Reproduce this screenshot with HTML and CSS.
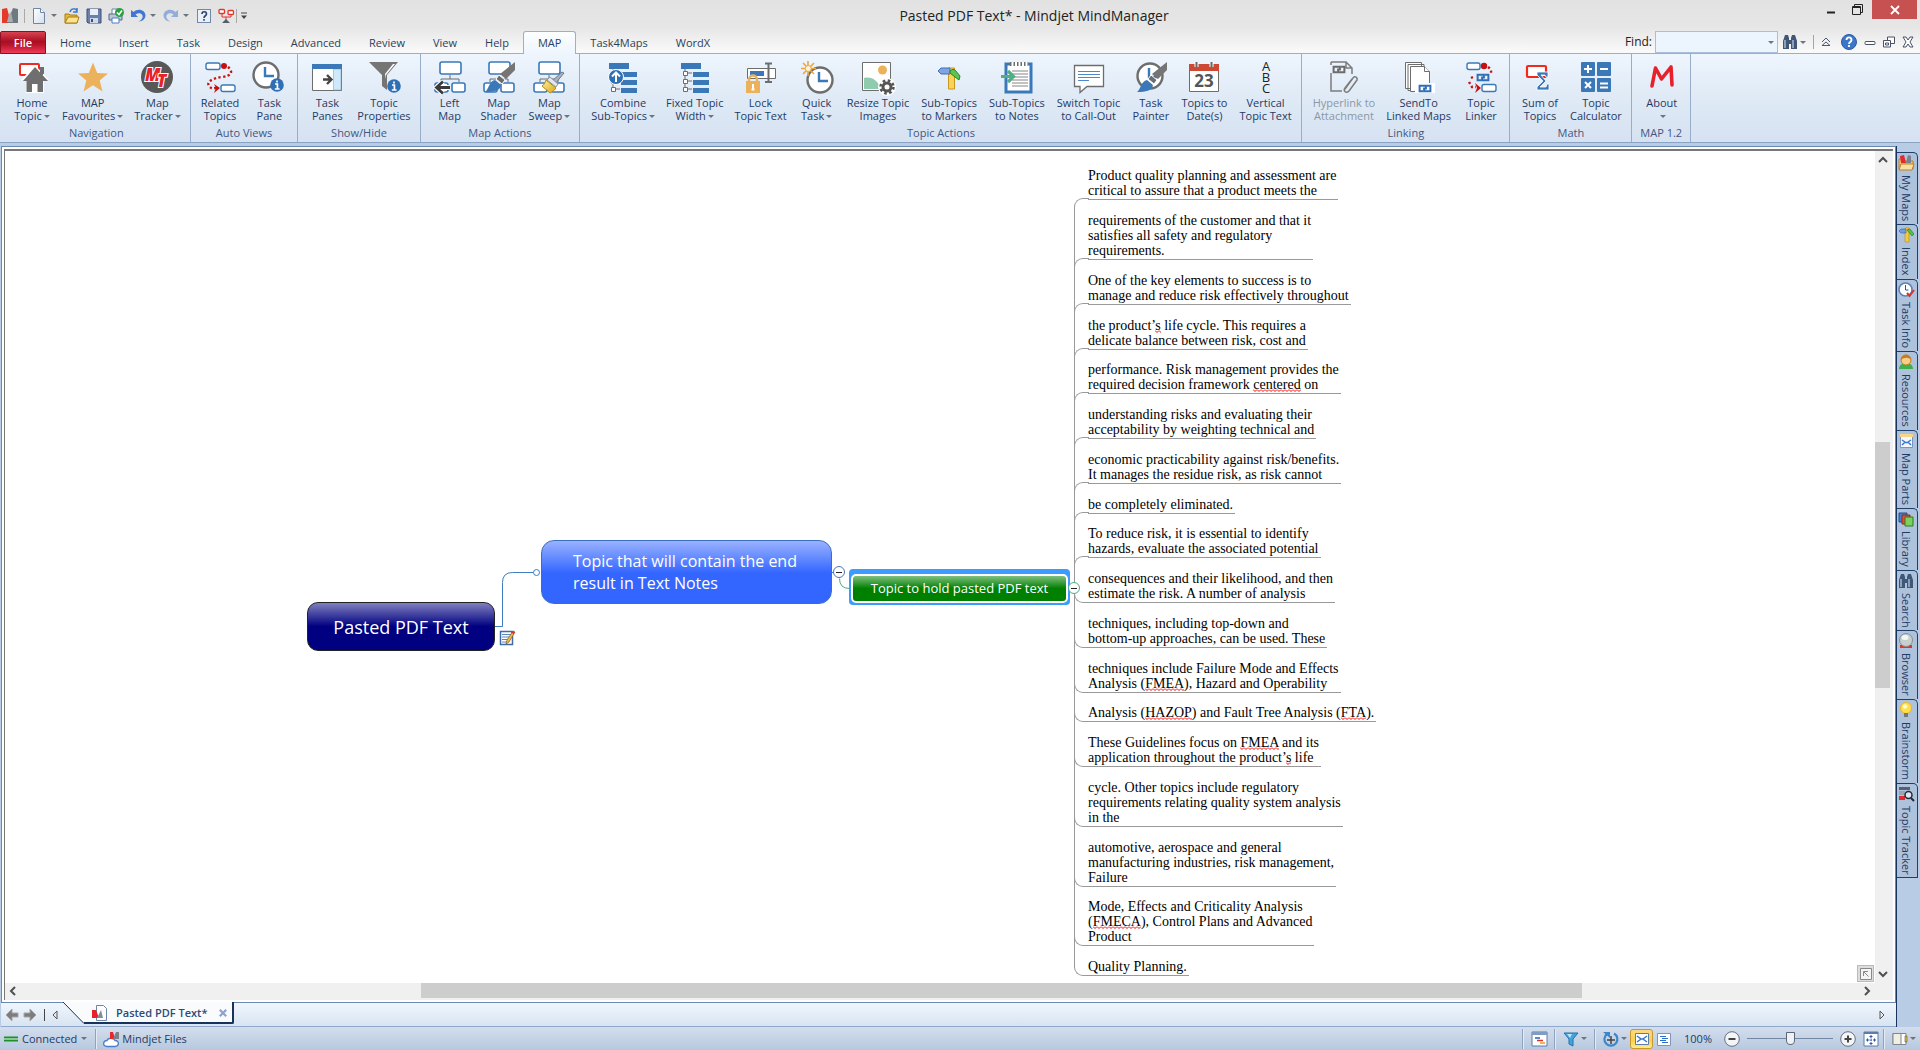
FILE: index.html
```html
<!DOCTYPE html>
<html lang="en">
<head>
<meta charset="utf-8">
<title>Pasted PDF Text* - Mindjet MindManager</title>
<link rel="stylesheet" href="styles.css">
</head>
<body>
<svg class="defs" width="0" height="0" aria-hidden="true">
  <defs>
    <linearGradient id="gold" x1="0" y1="0" x2="1" y2="1"><stop offset="0" stop-color="#fff2a0"/><stop offset="1" stop-color="#d9a514"/></linearGradient>
    <linearGradient id="page" x1="0" y1="0" x2="1" y2="1"><stop offset="0" stop-color="#fff"/><stop offset="1" stop-color="#d5dfec"/></linearGradient>
    <symbol id="mapbase" viewBox="0 0 32 32">
      <g fill="#fff" stroke="#3b78b8" stroke-width="1.6"><rect x="6" y="1" width="21" height="12" rx="2"/><rect x="1" y="22" width="13" height="9" rx="2"/><rect x="18" y="22" width="13" height="9" rx="2"/></g>
      <path d="M16 14v4M7 21v-3h18v3" fill="none" stroke="#6d6d6d"/>
    </symbol>
    <symbol id="brush" viewBox="0 0 32 32">
      <path d="M32 1v8l-9 9-6-5z" fill="#757575"/><path d="M16 14l6 5-3 4-6-5z" fill="#6d6d6d" stroke="#fff"/><path d="M12 19l6 5c-1 6-7 7-16 7 4-3 4-11 10-12z" fill="#3b78b8"/>
    </symbol>
    <symbol id="clock" viewBox="0 0 32 32">
      <circle cx="16" cy="16" r="12.5" fill="#fff" stroke="#6d6d6d" stroke-width="2.4"/><path d="M15 8v9h9" fill="none" stroke="#3b78b8" stroke-width="2.4"/>
    </symbol>
    <symbol id="info" viewBox="0 0 14 14">
      <circle cx="7" cy="7" r="6.8" fill="#2f6fb4"/><path d="M7 2.4v2.2M5 6h2.4v5M4.8 11h4.8" stroke="#fff" stroke-width="1.7" fill="none"/>
    </symbol>
    <symbol id="tree" viewBox="0 0 32 32">
      <path d="M6 7v22M6 12h7M6 20h7M6 28h7" stroke="#6d6d6d" fill="none"/>
      <g fill="#3b78b8"><path d="M2 2h20v6H2zM14 11h16v5H14zM14 19h16v5H14zM14 27h16v5H14z"/></g>
      <g fill="#fff" stroke="#6d6d6d"><path d="M4.500 10.500h4v4h-4zM4.500 18.500h4v4h-4zM4.500 26.500h4v4h-4z"/></g>
    </symbol>
    <symbol id="link" viewBox="0 0 16 10">
      <g fill="none" stroke="currentColor" stroke-width="2.2"><path d="M6 8H2V2h7v4"/><path d="M10 2h4v6H7V4"/></g>
    </symbol>
    <symbol id="binoc" viewBox="0 0 16 16">
      <path d="M3 1h3l1 3v11H1V7zM10 1h3l2 6v8H9V4zM6 6h4v4H6z" fill="#3f5878"/><path d="M3 6v8M11 6v8" stroke="#b7c6dc" stroke-width="1.3"/>
    </symbol>
    <symbol id="signpost" viewBox="0 0 16 16">
      <path d="M7 1h4v14H7z" fill="#f5c93a" stroke="#b98a16" stroke-width=".6"/><path d="M1 4l2-2h5v4H3z" fill="#6f9de0" stroke="#2f61b0" stroke-width=".6"/><path d="M9 3l3-1 4 5-2 2z" fill="#52c24a" stroke="#20791d" stroke-width=".6"/>
    </symbol>
    <symbol id="mlogo" viewBox="0 0 16 16">
      <path d="M0 1l5-1 4 15H0z" fill="#e43a2c"/><path d="M16 1l-5-1-6 15h11z" fill="#6f7a80"/><path d="M7 6l2-2 2 10H5z" fill="#a8adb0"/>
    </symbol>
  </defs>
</svg>

<header class="top">
  <div class="titlebar">
    <div class="quick">
      <svg class="i16" viewBox="0 0 16 16"><use href="#mlogo"/></svg>
      <span class="vsep"></span>
      <button aria-label="New"><svg class="i16" viewBox="0 0 16 16"><path d="M2.500 .5h7l4 4v11h-11z" fill="url(#page)" stroke="#6e85a5"/><path d="M9.500 .5v4h4" fill="#fff" stroke="#6e85a5"/></svg></button>
      <button class="drop" aria-label="New options"><i class="caret"></i></button>
      <button aria-label="Open"><svg class="i16" viewBox="0 0 16 16"><path d="M1 15V6h4l1 1h7v8z" fill="#e6b83c" stroke="#a87d17"/><path d="M1 15l3-6h11l-2 6z" fill="#fbe28d" stroke="#a87d17"/><path d="M6 4c1-4 6-4 7-1M13 0v4H9" stroke="#3b78d0" stroke-width="1.500" fill="none"/></svg></button>
      <button aria-label="Save"><svg class="i16" viewBox="0 0 16 16"><path d="M1 1h14v14H2l-1-1z" fill="#6a7faa" stroke="#3d507a"/><path d="M4 1h8v6H4z" fill="#e8eef8"/><path d="M4 10h8v5H4z" fill="#cfd8e8"/><path d="M5 11h2v3H5z" fill="#3d507a"/></svg></button>
      <button aria-label="Print"><svg class="i16" viewBox="0 0 16 16"><path d="M4 1h7v6H4z" fill="#fff" stroke="#6e85a5"/><path d="M1 6h13v6H1z" fill="#b9c6da" stroke="#556b8e"/><path d="M4 10h7v5H4z" fill="#fff" stroke="#4d7fc0"/><circle cx="11.500" cy="4.500" r="4.500" fill="#2aa043"/><path d="M9 4.500l2 2 3-4" stroke="#fff" stroke-width="1.500" fill="none"/></svg></button>
      <button aria-label="Undo"><svg class="i16" viewBox="0 0 16 16"><path d="M1 2v7h7l-2.500-2.500c4-3 8 0 7 3-.6 2-2 3-4 4 4 0 7-3 7-6 0-5-7-8-12-3.500z" fill="#3f77d3"/></svg></button>
      <button class="drop" aria-label="Undo options"><i class="caret"></i></button>
      <button class="faded" aria-label="Redo"><svg class="i16" viewBox="0 0 16 16"><path d="M15 2v7H8l2.500-2.500c-4-3-8 0-7 3 .6 2 2 3 4 4-4 0-7-3-7-6 0-5 7-8 12-3.500z" fill="#3f77d3"/></svg></button>
      <button class="drop" aria-label="Redo options"><i class="caret"></i></button>
      <button aria-label="Help topics"><svg class="i16" viewBox="0 0 16 16"><rect x="1.500" y="1.500" width="13" height="13" fill="#eaf0f8" stroke="#7288a8"/><path d="M6 6c0-3 4.500-3 4.500 0 0 2-2.500 1.500-2.500 4M8 11v1.800" fill="none" stroke="#28436d" stroke-width="1.600"/></svg></button>
      <button aria-label="Map link"><svg class="i16" viewBox="0 0 16 16"><g fill="#fff" stroke="#e0352b" stroke-width="1.300"><rect x="1" y="1.500" width="5.500" height="4" rx="1"/><rect x="10" y="2.500" width="5.500" height="4" rx="1"/></g><path d="M4 6v3h9V7M8 9v4" fill="none" stroke="#e0352b"/><path d="M4 15l4-4 4 4z" fill="#555e6b"/></svg></button>
      <span class="vsep short"></span>
      <button class="drop" aria-label="Customize toolbar"><svg width="6" height="8" viewBox="0 0 6 8"><path d="M0 1h6" stroke="#444"/><path d="M0 3.500h6l-3 3.500z" fill="#444"/></svg></button>
    </div>
    <h1 class="title">Pasted PDF Text* - Mindjet MindManager</h1>
    <div class="winbtns">
      <button aria-label="Minimize"><svg width="10" height="12" viewBox="0 0 10 12"><path d="M1 9.500h8" stroke="#222" stroke-width="2"/></svg></button>
      <button aria-label="Restore"><svg width="12" height="12" viewBox="0 0 12 12"><path d="M3.500 3V1.500h8v8H10M1.500 3.500h8v8h-8z" fill="none" stroke="#222"/><path d="M1 4.500h9" stroke="#222"/></svg></button>
      <button class="close" aria-label="Close"><svg width="10" height="10" viewBox="0 0 10 10"><path d="M1 1l8 8M9 1L1 9" stroke="#fff" stroke-width="1.800"/></svg></button>
    </div>
  </div>
  <div class="tabrow">
    <nav class="tabs">
      <button class="file">File</button>
      <button>Home</button><button>Insert</button><button>Task</button><button>Design</button><button>Advanced</button><button>Review</button><button>View</button><button>Help</button><button class="active">MAP</button><button>Task4Maps</button><button>WordX</button>
    </nav>
    <div class="find">
      <label for="find">Find:</label>
      <span class="combo"><input id="find" type="text"><i class="caret"></i></span>
      <button aria-label="Search"><svg class="i16" viewBox="0 0 16 16"><use href="#binoc"/></svg><i class="caret"></i></button>
      <span class="vsep blue"></span>
      <button class="collapse" aria-label="Collapse ribbon"><svg width="10" height="10" viewBox="0 0 10 10"><path d="M1 5l4-4 4 4M1 8.500L5 5l4 3.500z" fill="none" stroke="#4b5a70"/></svg></button>
      <button aria-label="Help"><svg class="i16" viewBox="0 0 16 16"><circle cx="8" cy="8" r="7.500" fill="#3c76c9" stroke="#2a5aa3"/><path d="M5.500 6c0-3.500 5-3.500 5 0 0 2-2.500 2-2.500 4M8 11v2" fill="none" stroke="#fff" stroke-width="1.800"/></svg></button>
      <button aria-label="Minimize map"><svg width="12" height="12" viewBox="0 0 12 12"><rect x="1" y="5.500" width="10" height="3" rx="1" fill="#fff" stroke="#4b5266"/></svg></button>
      <button aria-label="Restore map"><svg width="12" height="12" viewBox="0 0 12 12"><path d="M4.500 1h7v6.500h-7z" fill="#fff" stroke="#4b5266"/><path d="M.5 4.500h7V11h-7z" fill="#fff" stroke="#4b5266"/><path d="M2.500 7h3v2h-3z" fill="none" stroke="#4b5266"/></svg></button>
      <button aria-label="Close map"><svg width="12" height="12" viewBox="0 0 12 12"><path d="M1 1h3l2 3 2-3h3L8 6l3 5H8L6 8l-2 3H1l3-5z" fill="#fff" stroke="#4b5266"/></svg></button>
    </div>
  </div>
</header>

<section class="ribbon">
  <div class="group">
    <div class="btns">
      <button><svg class="i32" viewBox="0 0 32 32"><rect x="4" y="3" width="19" height="11" rx="1" fill="#fff" stroke="#f02a1c" stroke-width="2"/><path d="M24 6h4v7h-4z" fill="#3b78b8"/><path d="M19 4l14 15h-5v13H10V19H5z" fill="#fff"/><path d="M19 6l13 14h-5v11h-5.500v-8H16v8h-5.500V20H7z" fill="#6f6f6f"/><path d="M24 6h3v8h-3z" fill="#6f6f6f"/></svg><span>Home<br>Topic<i class="caret"></i></span></button>
      <button><svg class="i32" viewBox="0 0 32 32"><path d="M16 1.500l4.200 10.500 10.800.6-8.300 7 2.800 10.900-9.500-6.200-9.500 6.200 2.800-10.900-8.300-7 10.800-.6z" fill="#ebb25b"/></svg><span>MAP<br>Favourites<i class="caret"></i></span></button>
      <button><svg class="i32" viewBox="0 0 32 32"><circle cx="16" cy="16" r="16" fill="#585858"/><text class="mt" x="4" y="20" font-size="17">M</text><text class="mt" x="16" y="26" font-size="17">T</text></svg><span>Map<br>Tracker<i class="caret"></i></span></button>
    </div>
    <h2>Navigation</h2>
  </div>
  <div class="group">
    <div class="btns">
      <button><svg class="i32" viewBox="0 0 32 32"><g fill="#fff" stroke="#3b78b8" stroke-width="1.400"><rect x="2" y="2" width="14" height="6.500" rx="2"/><rect x="17" y="24" width="14" height="6.500" rx="2"/></g><circle cx="20" cy="5" r="3" fill="#c8100f"/><path d="M24 6c6 5 3 9-6 10S2 21 5 25s5 2 7 2" fill="none" stroke="#c8100f" stroke-width="2.400" stroke-dasharray="2.200 2.400"/><path d="M10 23l6 4-6 5 2-5z" fill="#c8100f"/></svg><span>Related<br>Topics</span></button>
      <button><svg class="i32" viewBox="0 0 32 32"><use href="#clock" x="-3" y="-2" width="32" height="32"/><use href="#info" x="17" y="17" width="14" height="14"/></svg><span>Task<br>Pane</span></button>
    </div>
    <h2>Auto Views</h2>
  </div>
  <div class="group">
    <div class="btns">
      <button><svg class="i32" viewBox="0 0 32 32"><path d="M1.500 4v25.500h29V4" fill="#fff" stroke="#6d6d6d"/><path d="M22.500 8H30v21h-7.500z" fill="#cdeafc" stroke="#8fa8c0" stroke-width=".6"/><path d="M1 3h30v5H1z" fill="#3b78b8"/><path d="M12 18.500h8M16 14l4.500 4.500L16 23" fill="none" stroke="#444" stroke-width="2.400"/></svg><span>Task<br>Panes</span></button>
      <button><svg class="i32" viewBox="0 0 32 32"><path d="M1 1h29L19 14v15l-5-4V14z" fill="#757575"/><path d="M25 3h2l-9 11v4l-1-5z" fill="#fff"/><use href="#info" x="19" y="18" width="14" height="14"/></svg><span>Topic<br>Properties</span></button>
    </div>
    <h2>Show/Hide</h2>
  </div>
  <div class="group">
    <div class="btns">
      <button><svg class="i32" viewBox="0 0 32 32"><use href="#mapbase"/><path d="M15 26.500H3M9 20.500l-6.500 6 6.500 6" fill="none" stroke="#fff" stroke-width="5"/><path d="M16 26.500H3M9 20.500l-6.500 6 6.500 6" fill="none" stroke="#3a3a3a" stroke-width="2.800"/></svg><span>Left<br>Map</span></button>
      <button><svg class="i32" viewBox="0 0 32 32"><use href="#mapbase"/><use href="#brush"/></svg><span>Map<br>Shader</span></button>
      <button><svg class="i32" viewBox="0 0 32 32"><use href="#mapbase"/><path d="M31 12l-9 11-3-3 10-9z" fill="#a8b2bf" stroke="#707a88"/><path d="M17 16l8 7-2 3-9-7z" fill="#e4e8ee" stroke="#8a93a0"/><path d="M13 19l10 8c-2 3-4 4-6 5l-8-7c2-1 3-3 4-6z" fill="url(#gold)" stroke="#b98a16"/></svg><span>Map<br>Sweep<i class="caret"></i></span></button>
    </div>
    <h2>Map Actions</h2>
  </div>
  <div class="group large">
    <div class="btns">
      <button><svg class="i32" viewBox="0 0 32 32"><use href="#tree"/><circle cx="9" cy="16" r="7.500" fill="#2f6fb4" stroke="#fff"/><path d="M9 21v-9M5 15.500l4-4 4 4" fill="none" stroke="#fff" stroke-width="2"/></svg><span>Combine<br>Sub-Topics<i class="caret"></i></span></button>
      <button><svg class="i32" viewBox="0 0 32 32"><use href="#tree"/></svg><span>Fixed Topic<br>Width<i class="caret"></i></span></button>
      <button><svg class="i32" viewBox="0 0 32 32"><path d="M2.500 7.500h28v10h-28z" fill="#fff" stroke="#6d6d6d"/><path d="M5 10h14v5H5z" fill="#3b78b8"/><path d="M20 2.500h7M23.500 3v18M20 21h7" fill="none" stroke="#6d6d6d" stroke-width="2"/><path d="M4 21v-2c0-6 8-6 8 0v2" fill="none" stroke="#ebb25b" stroke-width="2.500"/><path d="M1 20h14v12H1z" fill="#ebb25b"/><path d="M8 23v5M6.500 28.500h3" stroke="#fff" stroke-width="2"/></svg><span>Lock<br>Topic Text</span></button>
      <button><svg class="i32" viewBox="0 0 32 32"><use href="#clock" x="3" y="3" width="32" height="32"/><g stroke="#eda63c" stroke-width="1.600"><path d="M7 0v15M0 7.500h15M2 2l11 11M13 2L2 13"/></g><circle cx="7.200" cy="7.500" r="3" fill="#fff3d6" stroke="#eda63c"/></svg><span>Quick<br>Task<i class="caret"></i></span></button>
      <button><svg class="i32" viewBox="0 0 32 32"><path d="M.5 1.500h28v28H.5z" fill="#fff" stroke="#6d6d6d"/><circle cx="20.500" cy="9" r="4.500" fill="#ebb25b"/><path d="M2 17c8-2 14 3 17 11H2z" fill="#8fcbae"/><circle cx="25" cy="26" r="6" fill="none" stroke="#fff" stroke-width="6"/><circle cx="25" cy="26" r="6.500" fill="none" stroke="#555" stroke-width="2.500" stroke-dasharray="2.600 2.500"/><circle cx="25" cy="26" r="4" fill="#fff" stroke="#555" stroke-width="3"/></svg><span>Resize Topic<br>Images</span></button>
      <button><svg class="i32" viewBox="0 0 32 32"><path d="M15.500 7h6v21h-6z" fill="#f7d35a" stroke="#c9971b"/><path d="M5 10l3-3h9v6H8z" fill="#7ea4e2" stroke="#426fb8"/><path d="M17 10c2-2 4-2 5-1l5 6-1 4-4-3-5-4z" fill="#5cc552" stroke="#2a8327"/></svg><span>Sub-Topics<br>to Markers</span></button>
      <button><svg class="i32" viewBox="0 0 32 32"><path d="M5 3h25v28H5z" fill="#fff" stroke="#3b78b8" stroke-width="3"/><path d="M9 1h18v5H9z" fill="#fff"/><path d="M9 3h18" stroke="#6d6d6d" stroke-width="4" stroke-dasharray="1.500 2"/><path d="M11 10h16M11 13h16M11 16h16M11 19h16M11 22h16M11 25h16" stroke="#858585"/><path d="M0 15.500h10M7 10l5.500 5.500L7 21" fill="none" stroke="#4caf86" stroke-width="3.200"/></svg><span>Sub-Topics<br>to Notes</span></button>
      <button><svg class="i32" viewBox="0 0 32 32"><path d="M1.500 4.500h29v21H14l-7 6v-6H1.500z" fill="#fff" stroke="#6d6d6d" stroke-width="1.300"/><path d="M5 10.500h22M5 13.500h22M5 16.500h22M5 19.500h11" stroke="#4d88c8"/></svg><span>Switch Topic<br>to Call-Out</span></button>
      <button><svg class="i32" viewBox="0 0 32 32"><use href="#clock" x="-1" y="-1" width="32" height="32"/><use href="#brush"/></svg><span>Task<br>Painter</span></button>
      <button><svg class="i32" viewBox="0 0 32 32"><path d="M1.500 4.500h29v26h-29z" fill="#fff" stroke="#6d6d6d"/><path d="M1 3h30v7H1z" fill="#cc4a33"/><path d="M8.500 1v5M23.500 1v5" stroke="#fff" stroke-width="4"/><path d="M8.500 1v5M23.500 1v5" stroke="#666" stroke-width="2"/><text class="day" x="16" y="26" text-anchor="middle">23</text></svg><span>Topics to<br>Date(s)</span></button>
      <button><svg class="i32" viewBox="0 0 32 32"><g class="abc" text-anchor="middle"><text x="16" y="10">A</text><text x="16" y="21">B</text><text x="16" y="32">C</text></g></svg><span>Vertical<br>Topic Text</span></button>
    </div>
    <h2>Topic Actions</h2>
  </div>
  <div class="group">
    <div class="btns">
      <button disabled><svg class="i32" viewBox="0 0 32 32"><path d="M3 1h15l6 6v6M18 1v6h6M3 12v18h11M3 1v3" fill="none" stroke="#7c7c7c" stroke-width="1.500"/><use href="#link" x="1" y="4" width="20" height="9" color="#6b6b6b"/><path d="M17 28l8-11c2-3 5 0 4 2l-8 11c-3 3-6 0-4-3l7-9" fill="none" stroke="#7c7c7c" stroke-width="1.500"/></svg><span>Hyperlink to<br>Attachment</span></button>
      <button><svg class="i32" viewBox="0 0 32 32"><g fill="#fff" stroke="#6d6d6d"><path d="M2.500 1.500h16v26h-16zM5 3.500h16v26H5z"/><path d="M7.500 5.500h14l5 5v20h-19z"/><path d="M21.500 5.500v5h5"/></g><path d="M12 22h20v10H12z" fill="#fff"/><use href="#link" x="13" y="23" width="18" height="9" color="#2f6fb4"/></svg><span>SendTo<br>Linked Maps</span></button>
      <button><svg class="i32" viewBox="0 0 32 32"><g fill="#fff" stroke="#3b78b8" stroke-width="1.400"><rect x="2" y="2" width="13" height="6.500" rx="2"/><rect x="17" y="23.500" width="14" height="7" rx="2"/></g><circle cx="19" cy="5" r="3.200" fill="#c8100f"/><path d="M23 6c4 3 3 5 3 7M6 17l4-2M4 21l3 5h4" fill="none" stroke="#c8100f" stroke-width="2.400" stroke-dasharray="2.200 2.400"/><path d="M10 22l6 5-6 5 2-5z" fill="#c8100f"/><use href="#link" x="8" y="12" width="20" height="9" color="#2f6fb4"/></svg><span>Topic<br>Linker</span></button>
    </div>
    <h2>Linking</h2>
  </div>
  <div class="group">
    <div class="btns">
      <button><svg class="i32" viewBox="0 0 32 32"><rect x="3" y="5" width="19" height="11" rx="1" fill="#fff" stroke="#f02a1c" stroke-width="2.200"/><path d="M13 11h11v5h-2l-1-2h-4l5 6-6 6h6l1-3h2v6H13v-3l6-6-6-6z" fill="#3b78b8" stroke="#fff" stroke-width=".8"/></svg><span>Sum of<br>Topics</span></button>
      <button><svg class="i32" viewBox="0 0 32 32"><g fill="#3b78b8"><rect x="1" y="1" width="14" height="14" rx="1"/><rect x="17" y="1" width="14" height="14" rx="1"/><rect x="1" y="17" width="14" height="14" rx="1"/><rect x="17" y="17" width="14" height="14" rx="1"/></g><path d="M8 4v8M4 8h8M20 8h8M5 21l6 6M11 21l-6 6M20 22.500h8M20 26.500h8" stroke="#fff" stroke-width="2"/></svg><span>Topic<br>Calculator</span></button>
    </div>
    <h2>Math</h2>
  </div>
  <div class="group">
    <div class="btns">
      <button><svg class="i32" viewBox="0 0 32 32"><path d="M6 25L9.500 7l6 11L25 6l1 18" fill="none" stroke="#e8202a" stroke-width="3.600" stroke-linecap="round" stroke-linejoin="round"/></svg><span>About<br><i class="caret"></i></span></button>
    </div>
    <h2>MAP 1.2</h2>
  </div>
</section>

<main class="work">
  <div class="docs">
    <div class="frame">
      <div class="pane">
        <div class="canvas">
          <svg class="wires" width="1080" height="520" aria-hidden="true">
            <g fill="none" stroke="#3d7dc0"><path d="M490 475.500h7.500v-44q0-10 10-10h21M827 421.500h2"/><circle cx="531.500" cy="421.500" r="3" fill="#fff"/></g>
            <path d="M834.500 427.500q0 10 10 10" fill="none" stroke="#4dae78"/>
          </svg>
          <div class="node central">Pasted PDF Text</div>
          <svg class="noteicon" width="16" height="16" viewBox="0 0 16 16"><path d="M1.500 1.500h12v13h-12z" fill="#fff" stroke="#3f6ca8" stroke-width="1.500"/><path d="M3 4.500h9M3 7h8M3 9.500h6M3 12h5" stroke="#5d86bd"/><path d="M14 1l2 1-6 10-3 2 1-4z" fill="#f2b84b" stroke="#8a5a16" stroke-width=".7"/><path d="M13 1l3 1-1 2-3-1z" fill="#d4362c"/></svg>
          <div class="node main-topic">Topic that will contain the end<br>result in Text Notes</div>
          <button class="fold one" aria-label="Collapse"></button>
          <div class="node selected"><span>Topic to hold pasted PDF text</span></div>
          <ul class="topics">
            <li class="up">Product quality planning and assessment are<br>critical to assure that a product meets the</li>
            <li class="up">requirements of the customer and that it<br>satisfies all safety and regulatory<br>requirements.</li>
            <li class="up">One of the key elements to success is to<br>manage and reduce risk effectively throughout</li>
            <li class="up">the product’<u>s</u> life cycle. This requires a<br>delicate balance between risk, cost and</li>
            <li class="up">performance. Risk management provides the<br>required decision framework <u>centered</u> on</li>
            <li class="up">understanding risks and evaluating their<br>acceptability by weighting technical and</li>
            <li class="up">economic practicability against risk/benefits.<br>It manages the residue risk, as risk cannot</li>
            <li class="up">be completely eliminated.</li>
            <li class="up">To reduce risk, it is essential to identify<br>hazards, evaluate the associated potential</li>
            <li>consequences and their likelihood, and then<br>estimate the risk. A number of analysis</li>
            <li>techniques, including top-down and<br>bottom-up approaches, can be used. These</li>
            <li>techniques include Failure Mode and Effects<br>Analysis (<u>FMEA</u>), Hazard and Operability</li>
            <li>Analysis (<u>HAZOP</u>) and Fault Tree Analysis (<u>FTA</u>).</li>
            <li>These Guidelines focus on <u>FMEA</u> and its<br>application throughout the product’<u>s</u> life</li>
            <li>cycle. Other topics include regulatory<br>requirements relating quality system analysis<br>in the</li>
            <li>automotive, aerospace and general<br>manufacturing industries, risk management,<br>Failure</li>
            <li>Mode, Effects and Criticality Analysis<br>(<u>FMECA</u>), Control Plans and Advanced<br>Product</li>
            <li>Quality Planning.</li>
          </ul>
          <button class="fold two" aria-label="Collapse"></button>
          <button class="corner" aria-label="Show overview"><svg width="12" height="12" viewBox="0 0 12 12"><path d="M.5.5h11v11H.5z" fill="#f4f4f4" stroke="#888"/><path d="M3.500 8V3.500H8M4 4l4.500 4.500" fill="none" stroke="#888"/></svg></button>
        </div>
        <div class="vscroll">
          <svg width="10" height="8" viewBox="0 0 10 8"><path d="M1 6l4-4 4 4" fill="none" stroke="#505050" stroke-width="2"/></svg>
          <div class="track"><div class="thumb"></div></div>
          <svg width="10" height="8" viewBox="0 0 10 8"><path d="M1 2l4 4 4-4" fill="none" stroke="#505050" stroke-width="2"/></svg>
        </div>
        <div class="hscroll">
          <svg width="8" height="10" viewBox="0 0 8 10"><path d="M6 1L2 5l4 4" fill="none" stroke="#505050" stroke-width="2"/></svg>
          <div class="track"><div class="thumb"></div></div>
          <svg width="8" height="10" viewBox="0 0 8 10"><path d="M2 1l4 4-4 4" fill="none" stroke="#505050" stroke-width="2"/></svg>
        </div>
      </div>
    </div>
    <div class="doctabs">
      <div class="nav">
        <button aria-label="Back"><svg width="14" height="14" viewBox="0 0 14 14"><path d="M7 1L1 7l6 6v-4h6V5H7z" fill="#7d7d7d" stroke="#a5a5a5"/></svg></button>
        <button aria-label="Forward"><svg width="14" height="14" viewBox="0 0 14 14"><path d="M7 1l6 6-6 6v-4H1V5h6z" fill="#7d7d7d" stroke="#a5a5a5"/></svg></button>
        <span class="vsep dark"></span>
        <button aria-label="Scroll tabs left"><svg width="6" height="10" viewBox="0 0 6 10"><path d="M5 1L1 5l4 4z" fill="none" stroke="#555"/></svg></button>
      </div>
      <div class="doctab">
        <svg class="slant" width="22" height="22" viewBox="0 0 22 22"><path d="M1 0h21v21z" fill="#fafbfd"/><path d="M1 0l21 21.500" stroke="#17335c" fill="none"/></svg>
        <svg class="i16" viewBox="0 0 16 16"><path d="M4.500 .5h7l3 3v12h-10z" fill="#fff" stroke="#6e85a5"/><path d="M0 5h4l3 8H0z" fill="#e8202a"/><path d="M9 5l2 8H5z" fill="#858d94"/></svg>
        <b>Pasted PDF Text*</b>
        <button aria-label="Close tab"><svg width="8" height="8" viewBox="0 0 10 10"><path d="M1 1l8 8M9 1L1 9" stroke="#8ba3d2" stroke-width="2.800"/></svg></button>
      </div>
      <button class="more" aria-label="Scroll tabs right"><svg width="6" height="10" viewBox="0 0 6 10"><path d="M1 1l4 4-4 4z" fill="none" stroke="#555"/></svg></button>
    </div>
  </div>
  <aside class="side">
    <button><svg class="i16" viewBox="0 0 16 16"><path d="M1 14V4h5l1 2h8v8z" fill="#f2c474" stroke="#b9812a"/><path d="M2 1l4-1 2 8H3z" fill="#e02a2c"/><path d="M13 1l-3-1-2 8h5z" fill="#77828c"/><path d="M1 15l2-6h13l-2 6z" fill="#fbdf9f" stroke="#b9812a"/></svg><span>My Maps</span></button>
    <button><svg class="i16" viewBox="0 0 16 16"><use href="#signpost"/></svg><span>Index</span></button>
    <button><svg class="i16" viewBox="0 0 16 16"><circle cx="7.500" cy="7.500" r="6.500" fill="#fff" stroke="#5d82b8" stroke-width="1.600"/><path d="M7.500 3v5h3" stroke="#2a5aa3" fill="none"/><path d="M9 11l2.500 3L16 8" fill="none" stroke="#d8322b" stroke-width="2"/></svg><span>Task Info</span></button>
    <button><svg class="i16" viewBox="0 0 16 16"><path d="M1 15c0-8 14-8 14 0z" fill="#3fb04e"/><circle cx="8" cy="6" r="5" fill="#f6cf8b" stroke="#c47f1c"/><path d="M3 6c0-7 10-7 10 0-2-3-7-3-10 0z" fill="#c97c1d"/></svg><span>Resources</span></button>
    <button><svg class="i16" viewBox="0 0 16 16"><path d="M2.500 1.500h12v13h-12z" fill="#f4f8fe" stroke="#7a96bf"/><path d="M2 1h13v3H2z" fill="#f4d58a"/><path d="M4 7l3 2-3 3M13 7l-3 2 3 3M6 9.500h5" stroke="#3b78d0" fill="none" stroke-width="1.500"/></svg><span>Map Parts</span></button>
    <button><svg class="i16" viewBox="0 0 16 16"><path d="M1 2h8v9H1z" fill="#3d82d8" stroke="#1e4c93"/><path d="M4 4h8v9H4z" fill="#dd5138" stroke="#8f2a18"/><path d="M7 6h8v9H7z" fill="#7bd15f" stroke="#2c7d1d"/></svg><span>Library</span></button>
    <button><svg class="i16" viewBox="0 0 16 16"><use href="#binoc"/></svg><span>Search</span></button>
    <button><svg class="i16" viewBox="0 0 16 16"><path d="M2 12h12v3H2z" fill="#e0352b"/><circle cx="8" cy="7" r="6.500" fill="#c7d0cf" stroke="#84908f"/><ellipse cx="7" cy="4.500" rx="3.500" ry="2.500" fill="#f4f7f7"/></svg><span>Browser</span></button>
    <button><svg class="i16" viewBox="0 0 16 16"><circle cx="8" cy="6" r="5.500" fill="#ffe04a" stroke="#e8b91e"/><circle cx="7" cy="4.500" r="2.200" fill="#fffbd5"/><path d="M6 11h4v4H6z" fill="#777"/></svg><span>Brainstorm</span></button>
    <button><svg class="i16" viewBox="0 0 16 16"><path d="M1 1h11v3H1z" fill="#56616f"/><path d="M1 5h6v4H1z" fill="#9aa4b0"/><path d="M1 10h6v4H1z" fill="#e02a2c"/><circle cx="10.500" cy="9" r="3.500" fill="#dfe8f2" stroke="#1d2b3c" stroke-width="1.500"/><path d="M13 12l3 3" stroke="#1d2b3c" stroke-width="2"/></svg><span>Topic Tracker</span></button>
  </aside>
</main>

<footer class="status">
  <button class="conn"><svg width="14" height="6" viewBox="0 0 14 6"><path d="M0 1.500h14M0 4.500h14" stroke="#1f8f2a" stroke-width="2"/><path d="M0 3h14" stroke="#a5e0a0"/></svg>Connected<i class="caret"></i></button>
  <span class="ssep"></span>
  <button class="files"><svg class="i16" viewBox="0 0 16 16"><path d="M4 15.500c-5 0-4-6 0-6 1-3 7-3 8 0 5 0 4 6 0 6z" fill="#fff" stroke="#4c7fc8" stroke-width="1.300"/><path d="M7 1h3l2 7H7z" fill="#e02a2c"/><path d="M16 1l-3 0-3 7h6z" fill="#77828c"/></svg>Mindjet Files</button>
  <div class="tools">
    <span class="ssep"></span>
    <button aria-label="Gantt view"><svg class="i16" viewBox="0 0 16 16"><path d="M1 1h15v14H1z" fill="#fff" stroke="#5d7da8"/><path d="M1 1h15v3H1z" fill="#7f9cc4"/><path d="M4 7h5" stroke="#2a5fb8" stroke-width="1.500"/><path d="M6 9.500h6" stroke="#d8322b" stroke-width="1.500"/><path d="M9 12h5" stroke="#e89a24" stroke-width="1.500"/></svg></button>
    <span class="ssep"></span>
    <button aria-label="Filter"><svg class="i16" viewBox="0 0 16 16"><path d="M1 2h14l-5 6v7l-4-2V8z" fill="#45a3dc" stroke="#2272ab"/><path d="M4 3h5L7 7z" fill="#bfe3f8"/></svg><i class="caret"></i></button>
    <span class="ssep"></span>
    <button aria-label="Refresh"><svg class="i16" viewBox="0 0 16 16"><path d="M4 3a6.500 6.500 0 1 0 7-.500" fill="none" stroke="#3b86cc" stroke-width="2.200"/><path d="M0 1h7v6z" fill="#3b86cc"/><path d="M8 5v8M4 9h8" stroke="#444" stroke-width="1.500"/></svg><i class="caret"></i></button>
    <button class="on" aria-label="Map view"><svg class="i16" viewBox="0 0 16 16"><path d="M1.500 2.500h13v11h-13z" fill="#fff" stroke="#5d7da8"/><path d="M3 5l4 3-4 3M13 5L9 8l4 3M6 8h4" fill="none" stroke="#3b78d0" stroke-width="1.500"/></svg></button>
    <button class="outline" aria-label="Outline view"><svg class="i16" viewBox="0 0 16 16"><path d="M1.500 2.500h13v12h-13z" fill="#fff" stroke="#7f96b8"/><path d="M4 5.500h6M6 7.500h6M4 9.500h6M6 11.500h6" stroke="#2a6fc8"/></svg></button>
    <label for="zoom">100%</label>
    <button aria-label="Zoom out"><svg class="i16" viewBox="0 0 16 16"><circle cx="8" cy="8" r="7.300" fill="#f3f5f8" stroke="#66707f"/><path d="M4.500 8h7" stroke="#444" stroke-width="2"/></svg></button>
    <input id="zoom" type="range" min="0" max="100" value="50">
    <button aria-label="Zoom in"><svg class="i16" viewBox="0 0 16 16"><circle cx="8" cy="8" r="7.300" fill="#f3f5f8" stroke="#66707f"/><path d="M4.500 8h7M8 4.500v7" stroke="#444" stroke-width="2"/></svg></button>
    <button class="fit" aria-label="Fit map"><svg class="i16" viewBox="0 0 16 16"><path d="M1 1h14v14H1z" fill="#fff" stroke="#5d7da8"/><path d="M1 1h14v2H1z" fill="#5d7da8"/><path d="M8 4l2 2H6zM8 14l2-2H6zM3 9l2-2v4zM13 9l-2-2v4z" fill="#2a55a8"/><path d="M8 6v6M5 9h6" stroke="#2a55a8" stroke-dasharray="1.500 1"/></svg></button>
    <span class="ssep"></span>
    <button aria-label="Task panes"><svg class="i16" viewBox="0 0 16 16"><path d="M1 2.500h13v11H1z" fill="#fff" stroke="#7f8794"/><path d="M1 2.500h8v11H1z" fill="#f1efe0" stroke="#7f8794"/><path d="M13 5h2v6h-2z" fill="#f0b823" stroke="#555" stroke-width=".6"/></svg><i class="caret"></i></button>
  </div>
</footer>
</body>
</html>
```
FILE: styles.css
```css
* { box-sizing: border-box; }
body {
  margin: 0;
  height: 100vh;
  min-height: 600px;
  display: flex;
  flex-direction: column;
  background: #b9cce5;
  font: 12px/16px "Open Sans", "Noto Sans", sans-serif;
  color: #1f3a64;
  overflow: hidden;
}
.defs { position: absolute; }
svg { display: block; flex: none; overflow: visible; }
button {
  margin: 0;
  padding: 0;
  border: 0;
  background: none;
  font: inherit;
  color: inherit;
}
h1, h2 { margin: 0; font-weight: 400; }
.i16 { width: 16px; height: 16px; }
.i32 { width: 32px; height: 32px; }
.caret {
  display: inline-block;
  border: 3px solid transparent;
  border-top-color: #6c747f;
  border-bottom: 0;
}
.vsep { width: 1px; height: 14px; background: #a9a9a9; }

/* title bar and tabs */
.top { background: linear-gradient(#e2e2e2, #e6e6e6 50%, #fbfbfb); }
.titlebar { display: flex; height: 31px; }
.quick { display: flex; align-items: center; padding-left: 2px; gap: 6px; }
.quick button { display: flex; }
.quick .drop { width: 6px; margin: 0 1px 0 -2px; }
.quick .vsep.short { margin-left: -4px; }
.quick .faded { opacity: .5; }
.title { flex: 1; text-align: center; font-size: 14px; line-height: 32px; color: #222; }
.winbtns { display: flex; align-items: flex-start; padding-right: 3px; gap: 4px; }
.winbtns button { display: flex; align-items: center; justify-content: center; width: 22px; height: 18px; }
.winbtns .close { width: 45px; height: 19px; background: #c75050; }

.tabrow { display: flex; justify-content: space-between; height: 23px; border-bottom: 1px solid #9ab0c8; }
.tabs { display: flex; }
.tabs button { padding: 0 14px; height: 23px; line-height: 23px; font-size: 11px; color: #2b3f5c; }
.tabs .file {
  width: 46px;
  padding: 0;
  border: 1px solid #8f0f1e;
  border-radius: 2px 2px 0 0;
  background: linear-gradient(#d8434f, #a90f24 45%, #b8142c 60%, #f03a56);
  color: #fff;
  font-weight: 600;
  line-height: 20px;
}
.tabs .active { background: linear-gradient(#fdfeff, #eef5fd); border: 1px solid #9ab0c8; border-bottom: 0; border-radius: 3px 3px 0 0; line-height: 22px; }
.find { display: flex; align-items: center; height: 22px; padding-right: 6px; gap: 7px; color: #222; }
.find button { display: flex; align-items: center; gap: 2px; }
.find .vsep { background: #8fa9cb; }
.find label { margin-right: -4px; }
.find .collapse { margin-right: 3px; }
.combo { position: relative; display: flex; margin-right: -3px; }
.combo input { width: 123px; height: 22px; border: 1px solid #a9bedb; background: #ecf4fd; padding: 0 14px 0 4px; font: inherit; }
.combo .caret { position: absolute; right: 4px; top: 10px; }

/* ribbon */
.ribbon {
  display: flex;
  height: 89px;
  padding-left: 3px;
  background: linear-gradient(#eef5fd, #dfeaf6 50%, #d6e2f1);
  border-bottom: 1px solid #8aa3c3;
}
.group { display: flex; flex-direction: column; justify-content: space-between; padding: 7px 4px 1px; border-right: 1px solid #98adca; }
.group.large, .large ~ .group { padding-left: 5px; }
.btns { display: flex; }
.btns button { display: flex; flex-direction: column; align-items: center; gap: 3px; min-width: 49px; padding: 0 5px 0 6px; font-size: 11px; line-height: 13px; white-space: nowrap; }
.large button:nth-child(n+6) { padding-left: 7px; }
.btns button:disabled { color: #8d97a6; }
.btns .caret { margin: 0 0 2px 2px; }
.group h2 { font-size: 11px; line-height: 16px; text-align: center; color: #3f5883; }
.mt { font-family: "Open Sans", sans-serif; font-weight: 800; font-style: italic; fill: #e8202a; stroke: #fff; stroke-width: 2px; paint-order: stroke; }
.day { font: 700 17px "Open Sans", sans-serif; fill: #555; }
.abc { font: 13px "Open Sans", sans-serif; fill: #222; }

/* workspace */
.work { flex: 1; display: flex; min-height: 0; padding-top: 3px; }
.docs { flex: 1; display: flex; flex-direction: column; min-width: 0; padding-left: 1px; border-right: 1px solid #17335c; }
.frame { flex: 1; display: flex; min-height: 0; padding: 2px; background: #fff; border: 1px solid #6a88b0; }
.pane {
  flex: 1;
  display: grid;
  grid-template: minmax(0, 1fr) 17px / minmax(0, 1fr) 18px;
  border-top: 2px solid #777;
  border-left: 1px solid #777;
  background: #f0f0f0;
}
.canvas { position: relative; overflow: hidden; background: #fff; }
.vscroll { display: flex; flex-direction: column; align-items: center; padding: 5px 3px 5px 0; }
.vscroll .track { flex: 1; align-self: stretch; display: grid; grid-template-rows: 278fr 246fr 282fr; }
.vscroll .thumb { grid-row: 2; background: #cdcdcd; }
.hscroll { grid-column: 1 / -1; display: flex; align-items: center; padding: 0 22px 2px 4px; }
.hscroll .track { flex: 1; align-self: stretch; display: grid; grid-template-columns: 404fr 1161fr 281fr; }
.hscroll .thumb { grid-column: 2; background: #cdcdcd; }

.wires { position: absolute; left: 0; top: 0; }
.node { position: absolute; display: flex; align-items: center; white-space: nowrap; color: #fff; }
.central { left: 302px; top: 451px; width: 188px; height: 49px; justify-content: center; border: 1px solid #222; border-radius: 11px; background: linear-gradient(#8080c0, #000080 50%); font-size: 18px; }
.main-topic { left: 536px; top: 389px; width: 291px; height: 64px; padding-left: 31px; border: 1px solid #3a6fc0; border-radius: 13px; background: linear-gradient(#99b2ff, #3366ff 52%); font-size: 16px; line-height: 22px; }
.selected { left: 844px; top: 418px; width: 221px; height: 36px; padding: 4px 2px 2px; border-radius: 4px; background: #3c9bff; }
.selected span { width: 100%; height: 29px; border: 2px solid #fff; border-radius: 5px; background: linear-gradient(#80c080, #008000 50%); text-align: center; line-height: 24px; font-size: 13px; }
.noteicon { position: absolute; left: 494px; top: 479px; }
.fold { position: absolute; width: 12px; height: 12px; border: 1px solid #4b79b0; border-radius: 50%; background: #fff; display: flex; align-items: center; justify-content: center; }
.fold::before { content: ""; width: 6px; height: 1px; background: #222; }
.fold.one { left: 828px; top: 415px; }
.fold.two { left: 1063px; top: 431px; border-color: #4dae78; }
.corner { position: absolute; right: 1px; bottom: 1px; width: 17px; height: 17px; display: flex; align-items: center; justify-content: center; border: 1px solid #bbb; background: #ddd; }

.topics { position: absolute; left: 1069px; top: 4px; margin: 0; padding: 0 0 0 14px; list-style: none; display: flex; flex-direction: column; align-items: flex-start; font: 14px/15px "Liberation Serif", serif; color: #000; white-space: nowrap; }
.topics::before { content: ""; position: absolute; left: 0; top: 52px; bottom: 8px; border-left: 1px solid #999; }
.topics li { position: relative; padding: 13px 2px 1px 0; border-bottom: 1px solid #999; }
.topics li:nth-child(4n+5) { padding-top: 12px; }
.topics li::before { content: ""; position: absolute; left: -14px; bottom: -1px; width: 14px; height: 9px; border: solid #999; border-width: 0 0 1px 1px; border-bottom-left-radius: 9px; }
.topics .up::before { bottom: -9px; border-width: 1px 0 0 1px; border-radius: 9px 0 0 0; }
.topics u { text-decoration: none; background: url("data:image/svg+xml,%3Csvg xmlns='http://www.w3.org/2000/svg' width='4' height='3'%3E%3Cpath d='M0 .5l2 2 2-2' fill='none' stroke='red'/%3E%3C/svg%3E") left bottom repeat-x; }

.doctabs { display: flex; height: 24px; background: linear-gradient(#f0f6fd, #d8e4f2); border-bottom: 1px solid #8fa9cb; }
.nav { display: flex; align-items: center; gap: 4px; width: 62px; padding-left: 4px; }
.nav .vsep { margin: 0 3px; height: 12px; background: #444; }
.doctab { position: relative; display: flex; align-items: center; height: 22px; margin: -1px 0 0 21px; padding: 1px 5px 0 8px; background: #fafbfd; border: solid #17335c; border-width: 0 2px 2px 0; border-radius: 0 0 2px 0; color: #2d4a78; }
.doctab .slant { position: absolute; right: 100%; top: 0; }
.doctab b { margin: 0 12px 0 8px; font-size: 11px; font-weight: 600; }
.more { margin-left: auto; margin-right: 11px; }

/* docked task panes */
.side { width: 23px; padding-top: 6px; display: flex; flex-direction: column; align-items: flex-start; }
.side button { display: flex; flex-direction: column; align-items: center; gap: 4px; width: 21px; padding: 2px 2px 3px 0; border: 1px solid #1f3f6b; border-left: 0; border-bottom: 0; border-top-right-radius: 5px; background: #afc2dc; }
.side button:last-child { border-bottom: 1px solid #1f3f6b; }
.side span { writing-mode: vertical-rl; font-size: 11px; line-height: 16px; }

/* status bar */
.status { display: flex; align-items: center; height: 23px; padding-left: 4px; background: linear-gradient(#d3deed, #b7c8de); font-size: 11px; }
.status button { display: flex; align-items: center; }
.conn { gap: 4px; }
.ssep { width: 2px; height: 20px; background: #8fa3c0; border-right: 1px solid #e3ebf5; }
.conn + .ssep { margin: 0 6px 0 8px; }
.files { gap: 3px; }
.tools { margin-left: auto; display: flex; align-items: center; gap: 7px; padding-right: 4px; }
.tools button { gap: 2px; }
.tools .on { justify-content: center; width: 23px; height: 20px; margin: 0 -4px; border: 1px solid #c9992e; border-radius: 3px; background: linear-gradient(#fbd988, #fdd04e 60%, #ffeb8c); }
.tools label { margin: 0 5px; }
.tools .fit { margin-right: -3px; }
.tools input { -webkit-appearance: none; appearance: none; width: 86px; height: 14px; margin: 0; background: linear-gradient(#7386a3, #7386a3) center / 100% 1px no-repeat; }
.tools input::-webkit-slider-thumb { -webkit-appearance: none; width: 9px; height: 13px; border: 1px solid #5b6778; border-radius: 1px 1px 5px 5px; background: #eef2f7; }
```
